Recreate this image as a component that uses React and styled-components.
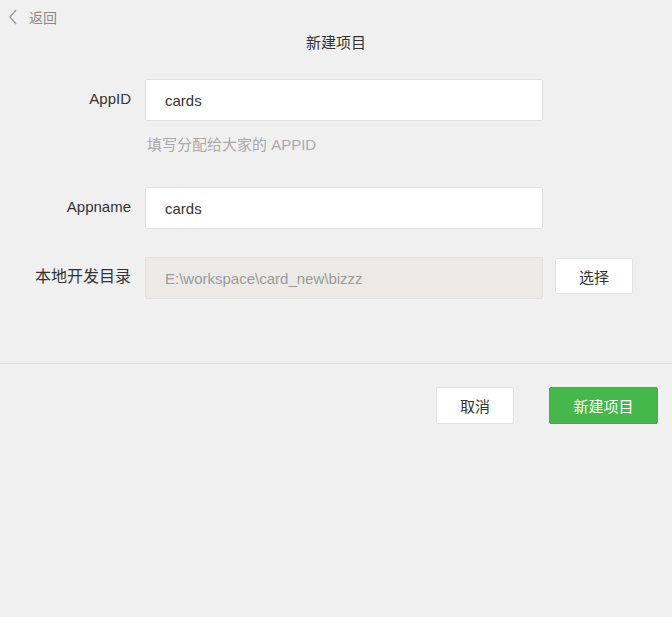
import React, { useState } from "react";
import styled, { createGlobalStyle } from "styled-components";

const GlobalStyle = createGlobalStyle`
  html, body {
    margin: 0;
    padding: 0;
    background: #f1f0f0;
  }
  body {
    font-family: "Liberation Sans", Arial, "Noto Sans CJK SC", sans-serif;
    color: #333;
  }
`;

const Page = styled.div`
  min-height: 617px;
  background: #f1f0f0;
`;

const TopBar = styled.div`
  display: flex;
  align-items: center;
  height: 33px;
  padding-left: 8px;
`;

const BackLink = styled.a`
  display: flex;
  align-items: center;
  gap: 11px;
  color: #8a8a8a;
  font-size: 14px;
  cursor: pointer;
  text-decoration: none;
`;

const Title = styled.h1`
  margin: 0;
  font-size: 15px;
  font-weight: normal;
  line-height: 20px;
  text-align: center;
  color: #333;
`;

const Form = styled.form`
  display: flex;
  flex-direction: column;
  padding-top: 26px;
`;

const Row = styled.div`
  display: flex;
  align-items: flex-start;
  margin-top: ${(p) => p.$gap || 0}px;
`;

const Label = styled.label`
  flex: 0 0 131px;
  padding-top: 10px;
  padding-right: 14px;
  text-align: right;
  font-size: ${(p) => (p.$cjk ? 16 : 15)}px;
  line-height: 20px;
  color: #333;
`;

const Input = styled.input`
  box-sizing: border-box;
  width: 398px;
  height: 42px;
  padding: 0 19px;
  border: 1px solid #e2e1e1;
  border-radius: 1px;
  background: ${(p) => (p.disabled ? "#ebeae7" : "#fff")};
  color: ${(p) => (p.disabled ? "#9a9a9a" : "#333")};
  font-family: "Liberation Sans", Arial, sans-serif;
  font-size: 15px;
  outline: none;
`;

const Hint = styled.p`
  margin: 16px 0 0 147px;
  font-size: 15px;
  line-height: 16px;
  color: #a8a8a8;
`;

const Button = styled.button`
  box-sizing: border-box;
  height: ${(p) => p.$h || 37}px;
  width: ${(p) => p.$w}px;
  margin-top: ${(p) => p.$top || 0}px;
  margin-left: ${(p) => p.$left || 0}px;
  border-radius: 2px;
  border: 1px solid ${(p) => (p.$primary ? "#3fae45" : "#e3e2e2")};
  background: ${(p) => (p.$primary ? "#45b74b" : "#fff")};
  color: ${(p) => (p.$primary ? "#fff" : "#333")};
  font-family: "Liberation Sans", "Noto Sans CJK SC", sans-serif;
  font-size: 15px;
  cursor: pointer;
`;

const Divider = styled.hr`
  margin: 64px 0 0;
  border: none;
  border-top: 1px solid #dcdbdb;
`;

const Footer = styled.div`
  display: flex;
  justify-content: flex-end;
  gap: 35px;
  padding: 23px 14px 0 0;
`;

const ChevronLeft = () => (
  <svg width="10" height="16" viewBox="0 0 10 16" fill="none">
    <path d="M8 1L2 8l6 7" stroke="#9a9a9a" strokeWidth="1.3" />
  </svg>
);

export default function App() {
  const [appId, setAppId] = useState("cards");
  const [appName, setAppName] = useState("cards");

  return (
    <Page>
      <GlobalStyle />
      <TopBar>
        <BackLink>
          <ChevronLeft />
          返回
        </BackLink>
      </TopBar>
      <Title>新建项目</Title>
      <Form onSubmit={(e) => e.preventDefault()}>
        <Row>
          <Label>AppID</Label>
          <Input value={appId} onChange={(e) => setAppId(e.target.value)} />
        </Row>
        <Hint>填写分配给大家的 APPID</Hint>
        <Row $gap={34}>
          <Label>Appname</Label>
          <Input value={appName} onChange={(e) => setAppName(e.target.value)} />
        </Row>
        <Row $gap={28}>
          <Label $cjk>本地开发目录</Label>
          <Input disabled value="E:\workspace\card_new\bizzz" />
          <Button type="button" $w={78} $h={36} $top={1} $left={12}>
            选择
          </Button>
        </Row>
      </Form>
      <Divider />
      <Footer>
        <Button type="button" $w={78}>取消</Button>
        <Button type="button" $primary $w={109}>新建项目</Button>
      </Footer>
    </Page>
  );
}
